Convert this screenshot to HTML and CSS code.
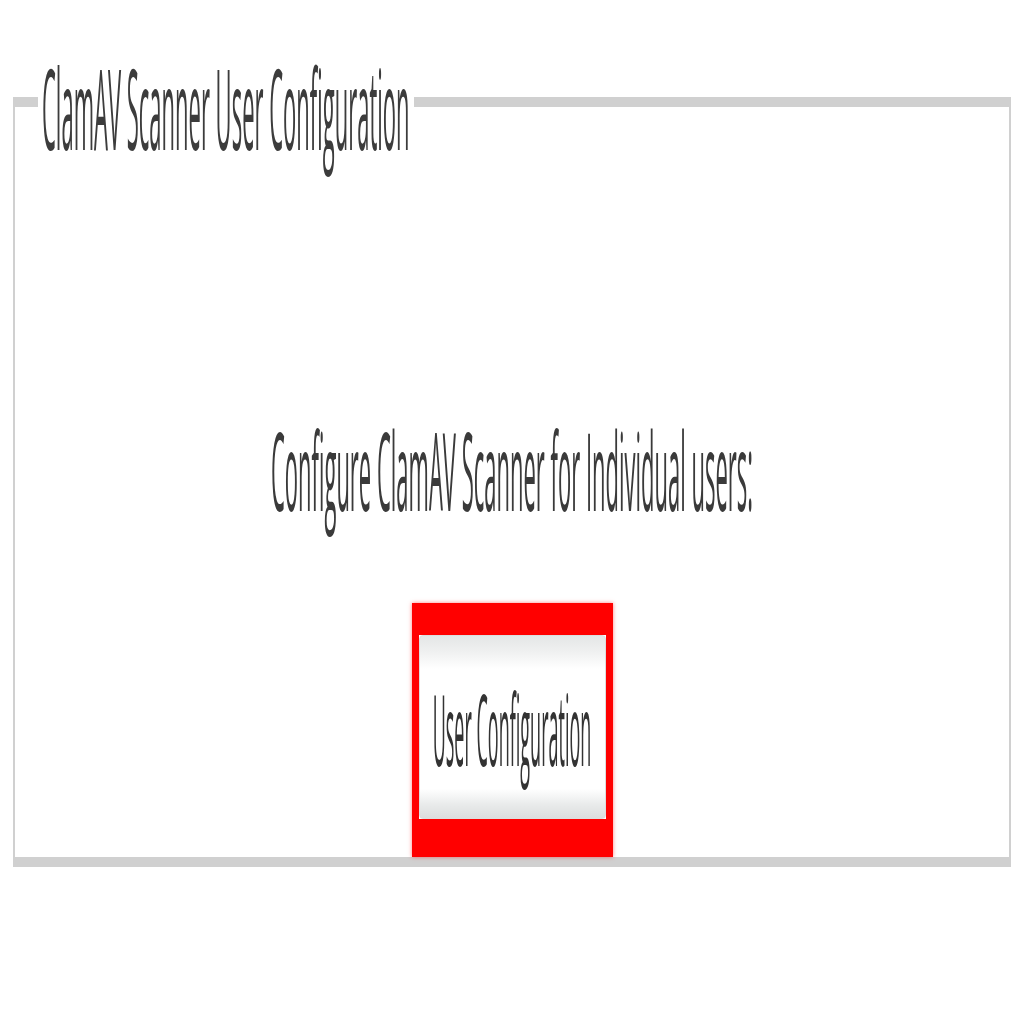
FILE: index.html
```html
<!DOCTYPE html>
<html lang="en">
<head>
<meta charset="utf-8">
<title>ClamAV Scanner User Configuration</title>
<link rel="stylesheet" href="styles.css">
</head>
<body>
<fieldset class="panel">
  <legend class="panel-legend"><span class="stretch legend-text">ClamAV Scanner User Configuration</span></legend>
  <div class="panel-body">
    <div class="desc"><span class="stretch desc-text">Configure ClamAV Scanner for Individual users:</span></div>
    <div class="highlight">
      <button class="btn" type="button"><span class="stretch btn-text">User Configuration</span></button>
    </div>
  </div>
</fieldset>
</body>
</html>
```

FILE: styles.css
```css
html, body {
  margin: 0;
  padding: 0;
  background: #ffffff;
}

body {
  width: 1024px;
  height: 1024px;
  overflow: hidden;
  font-family: "Open Sans", "DejaVu Sans", sans-serif;
  color: #363636;
}

.stretch {
  display: inline-block;
  line-height: 1;
  white-space: nowrap;
  transform-origin: center center;
}

.panel {
  margin: 42px 13px 0 13px;
  padding: 0;
  min-width: 0;
  border-style: solid;
  border-color: #d0d0d0;
  border-width: 10px 2px 10px 2px;
  filter: blur(0.7px);
}

.panel-legend {
  margin-left: 23px;
  padding: 0 4px;
  height: 120px;
  line-height: 120px;
}

.legend-text {
  font-size: 22px;
  transform: scaleY(5.1);
  vertical-align: middle;
  color: #3c3c3c;
}

.panel-body {
  display: flex;
  flex-direction: column;
  align-items: center;
  padding-top: 245px;
}

.desc {
  height: 120px;
  display: flex;
  align-items: center;
  justify-content: center;
}

.desc-text {
  font-size: 22px;
  transform: scaleY(4.9);
  color: #3a3a3a;
}

.highlight {
  margin-top: 76px;
  border-style: solid;
  border-color: #ff0000;
  border-width: 32px 7px 38px 7px;
  display: flex;
  box-shadow: 0 0 4px rgba(255, 0, 0, 0.5);
}

.btn {
  width: 187px;
  height: 184px;
  margin: 0;
  padding: 0;
  border: 1px solid #dcdede;
  border-radius: 4px;
  background: linear-gradient(to bottom, #e4e6e6 0%, #f0f1f1 9%, #ffffff 18%, #ffffff 84%, #e8eaea 93%, #dcdede 100%);
  display: flex;
  align-items: center;
  justify-content: center;
  font-family: "Open Sans", "DejaVu Sans", sans-serif;
  color: #333333;
  cursor: pointer;
}

.btn-text {
  font-size: 18px;
  transform: scaleY(5.5);
}
```
